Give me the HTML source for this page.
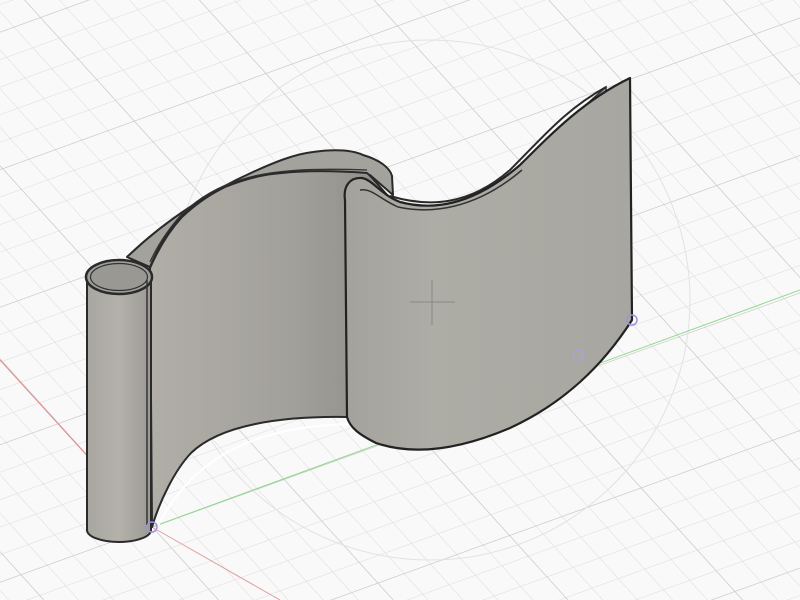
<!DOCTYPE html>
<html><head><meta charset="utf-8"><style>
html,body{margin:0;padding:0;width:800px;height:600px;overflow:hidden;background:#f9f9f9}
svg{display:block}
</style></head><body>
<svg width="800" height="600" viewBox="0 0 800 600" xmlns="http://www.w3.org/2000/svg">
<defs>
<pattern id="minor" width="28" height="28" patternUnits="userSpaceOnUse" patternTransform="matrix(0.94,-0.34,0.67,0.74,152,527)">
<path d="M0 0H28M0 0V28" stroke="#d9d9d9" stroke-width="1" fill="none"/>
</pattern>
<pattern id="major" width="140" height="140" patternUnits="userSpaceOnUse" patternTransform="matrix(0.94,-0.34,0.67,0.74,152,527)">
<path d="M0 0H140M0 0V140" stroke="#c6c6c6" stroke-width="1.3" fill="none"/>
</pattern>
<linearGradient id="lp" x1="0" x2="1" y1="0" y2="0">
<stop offset="0" stop-color="#b0aea7"/><stop offset="0.6" stop-color="#a2a09a"/><stop offset="1" stop-color="#8e8c86"/>
</linearGradient>
<linearGradient id="rp" x1="0" x2="1" y1="0" y2="0">
<stop offset="0" stop-color="#a4a29c"/><stop offset="0.3" stop-color="#adaca5"/><stop offset="1" stop-color="#a8a6a0"/>
</linearGradient>
<linearGradient id="cy" x1="0" x2="1" y1="0" y2="0">
<stop offset="0" stop-color="#a8a6a0"/><stop offset="0.5" stop-color="#b3b1aa"/><stop offset="1" stop-color="#9c9a94"/>
</linearGradient>
</defs>
<rect width="800" height="600" fill="#f9f9f9"/>
<rect width="800" height="600" fill="url(#minor)"/>
<rect width="800" height="600" fill="url(#major)"/>
<circle cx="430" cy="300" r="260" fill="none" stroke="#e2e2e2" stroke-width="1"/>
<line x1="0" y1="360" x2="152" y2="527" stroke="#e08a8a" stroke-width="1"/>
<line x1="152" y1="527" x2="280" y2="600" stroke="#e0a0a0" stroke-width="1"/>
<line x1="152" y1="527" x2="800" y2="290" stroke="#90d890" stroke-width="1"/>
<path d="M156 530 C190 458 255 426 350 424" fill="none" stroke="#ffffff" stroke-width="2"/>
<!-- back lip (left panel top) -->
<path d="M127 257 C150 235 170 220 190 207 C215 190 235 180 253 172 C275 162 295 154 313 152 C335 149 352 150 363 155 C380 160 390 168 392 176 L393 195 L370 175 C340 172 300 170 280 173 C255 177 235 182 223 187 C205 197 190 208 180 217 C168 230 158 248 150 267 Z" fill="#a4a29c" stroke="#2a2a2a" stroke-width="2" stroke-linejoin="round"/>
<path d="M150 262 C160 240 172 225 183 213 C200 197 220 186 240 180 C270 170 310 168 367 170" fill="none" stroke="#333" stroke-width="1.3"/>
<!-- left panel -->
<path d="M150 268 C160 245 172 228 182 217 C200 200 215 192 225 187 C245 179 265 174 282 173 C310 170 340 171 367 173 C375 180 382 190 390 198 L347 200 L347 417 C280 416 220 425 191 453 C175 470 160 500 152 527 Z" fill="url(#lp)" stroke="#2a2a2a" stroke-width="2" stroke-linejoin="round"/>
<!-- back thin wall right -->
<path d="M580 110 L606 87 L606 150 L576 160 Z" fill="#a3a19b" stroke="#333" stroke-width="1.5"/>
<line x1="576" y1="113" x2="576" y2="140" stroke="#444" stroke-width="1"/>
<path d="M390 196 C430 208 470 205 510 170 C545 135 565 110 606 87" fill="none" stroke="#2a2a2a" stroke-width="2"/>
<!-- right panel -->
<path d="M345 200 C343 186 350 177 362 178 C373 180 380 194 400 202 C430 210 470 208 520 165 C555 130 585 100 630 78 L632 320 C600 370 560 405 510 428 C470 445 420 458 376 443 C360 435 350 428 347 417 Z" fill="url(#rp)" stroke="#222" stroke-width="2.2" stroke-linejoin="round"/>
<path d="M360 190 C372 188 378 198 398 207 C430 214 475 210 522 170" fill="none" stroke="#333" stroke-width="1.5"/>
<!-- crosshair -->
<line x1="410" y1="302" x2="455" y2="302" stroke="#8a8883" stroke-width="1"/>
<line x1="432" y1="280" x2="432" y2="325" stroke="#8a8883" stroke-width="1"/>
<!-- cylinder -->
<path d="M87 277 L87 530 A32 12 0 0 0 151 530 L151 277 Z" fill="url(#cy)" stroke="#2a2a2a" stroke-width="2"/>
<ellipse cx="119" cy="277" rx="33" ry="17" fill="#a09e98" stroke="#2a2a2a" stroke-width="2.5"/>
<ellipse cx="119" cy="277" rx="28.5" ry="13.5" fill="#9a9892" stroke="#333" stroke-width="1.2"/>
<line x1="147" y1="280" x2="147" y2="525" stroke="#333" stroke-width="1.5"/>
<!-- vertex markers -->
<circle cx="152" cy="527" r="5" fill="none" stroke="#a090e0" stroke-width="1.5"/>
<circle cx="632" cy="320" r="5" fill="none" stroke="#a090e0" stroke-width="1.5"/>
<circle cx="578" cy="355" r="5" fill="none" stroke="#b0a0e0" stroke-width="1.2"/>
</svg>
</body></html>
